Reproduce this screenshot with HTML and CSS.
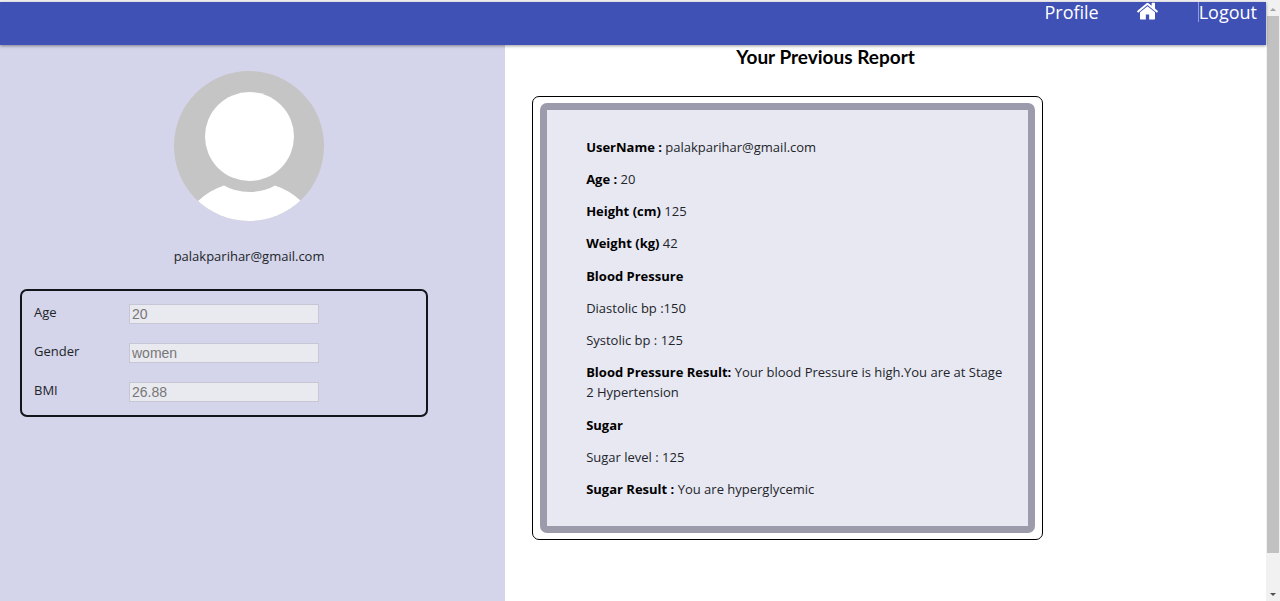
FILE: index.html
```html
<!DOCTYPE html>
<html lang="en">
<head>
<meta charset="utf-8">
<title>Your Previous Report</title>
<link rel="stylesheet" href="styles.css">
</head>
<body>
<div class="window">
  <div class="page">
    <header class="navbar">
      <nav class="nav-links">
        <a class="nav-link" href="#profile">Profile</a>
        <a class="nav-home" href="#home" aria-label="Home">
          <svg class="home-icon" viewBox="25 230 1614 1306" aria-hidden="true"><path fill="currentColor" d="M1408 992v480q0 26-19 45t-45 19h-384v-384h-256v384h-384q-26 0-45-19t-19-45v-480q0-1 .5-3t.5-3l575-474 575 474q1 2 1 6zm223-69l-62 74q-8 9-21 11h-3q-13 0-21-7l-692-577-692 577q-12 8-24 7-13-2-21-11l-62-74q-8-10-7-23.500t11-21.500l719-599q32-26 76-26t76 26l244 204v-195q0-14 9-23t23-9h192q14 0 23 9t9 23v408l219 182q10 8 11 21.500t-7 23.500z"/></svg>
        </a>
        <a class="nav-link nav-logout" href="#logout">Logout</a>
      </nav>
    </header>
    <div class="columns">
      <aside class="sidebar">
        <svg class="avatar" viewBox="0 0 150 150" role="img" aria-label="User avatar">
          <defs><clipPath id="disc"><circle cx="75" cy="75" r="75"/></clipPath></defs>
          <g clip-path="url(#disc)">
            <rect width="150" height="150" fill="#c5c5c5"/>
            <path fill="#fff" d="M24 130Q36 119 50 114.500Q61 121 75.500 121Q90 121 101 114.500Q115 119 127 130L127 150H24Z"/>
            <circle cx="75.500" cy="65.500" r="44.500" fill="#fff"/>
          </g>
        </svg>
        <p class="email">palakparihar@gmail.com</p>
        <form class="details">
          <label for="age">Age</label>
          <input id="age" type="text" value="20" disabled>
          <label for="gender">Gender</label>
          <input id="gender" type="text" value="women" disabled>
          <label for="bmi">BMI</label>
          <input id="bmi" type="text" value="26.88" disabled>
        </form>
      </aside>
      <main class="main">
        <h1 class="title">Your Previous Report</h1>
        <div class="report-frame">
          <div class="report">
            <section class="group">
              <p><b>UserName :</b> palakparihar@gmail.com</p>
              <p><b>Age :</b> 20</p>
              <p><b>Height (cm)</b> 125</p>
              <p><b>Weight (kg)</b> 42</p>
            </section>
            <section class="group">
              <p><b>Blood Pressure</b></p>
              <p>Diastolic bp :150</p>
              <p>Systolic bp : 125</p>
              <p><b>Blood Pressure Result:</b> Your blood Pressure is high.You are at Stage 2 Hypertension</p>
            </section>
            <section class="group">
              <p><b>Sugar</b></p>
              <p>Sugar level : 125</p>
              <p><b>Sugar Result :</b> You are hyperglycemic</p>
            </section>
          </div>
        </div>
      </main>
    </div>
  </div>
  <div class="scrollbar" aria-hidden="true">
    <svg class="arrow arrow-up" viewBox="0 0 14 14"><path d="M4 9L7 6L10 9Z"/></svg>
    <div class="track"><div class="thumb"></div></div>
    <svg class="arrow" viewBox="0 0 14 14"><path d="M4 6L7 9L10 6Z"/></svg>
  </div>
</div>
</body>
</html>
```
FILE: styles.css
```css
* {
  box-sizing: border-box;
}

body {
  margin: 0;
  background: #fff;
  color: #212529;
  font-family: "Open Sans", "Noto Sans", sans-serif;
  font-size: 13px;
  line-height: 20px;
}

p {
  margin: 0;
}

.window {
  display: flex;
  min-height: 100vh;
  border-top: 2px solid #f1f1f3;
}

.page {
  flex: 1;
  display: flex;
  flex-direction: column;
}

.navbar {
  position: relative;
  height: 43px;
  background: #3f51b5;
  box-shadow: 0 1px 3px rgba(0, 0, 0, 0.4);
}

.nav-links {
  display: flex;
  justify-content: flex-end;
  padding-right: 9px;
}

.nav-link,
.nav-home {
  color: #fff;
  font-size: 18px;
  line-height: 20px;
  text-decoration: none;
}

.nav-home {
  margin: 0 40px 0 38px;
}

.home-icon {
  display: block;
  width: 21px;
  height: 18px;
}

.nav-logout {
  border-left: 1px solid #8f9ae0;
}

.columns {
  flex: 1;
  display: flex;
}

.sidebar {
  width: 39.9%;
  padding: 26px 7px 0 0;
  background: #d4d4ea;
  display: flex;
  flex-direction: column;
}

.avatar {
  width: 150px;
  height: 150px;
  align-self: center;
}

.email {
  margin: 25px 0 23px;
  text-align: center;
}

.details {
  display: grid;
  grid-template-columns: 95px 190px;
  row-gap: 19px;
  width: 82%;
  margin-left: 20px;
  padding: 13px 12px;
  border: 2px solid #14141c;
  border-radius: 7px;
}

.details label {
  line-height: 16px;
}

.details input {
  width: 100%;
  height: 20px;
  padding: 0 2px;
  border: 1px solid #c6c6d4;
  background: #e9e9f0;
  color: #777;
  font-family: "Liberation Sans", sans-serif;
  font-size: 14px;
}

.main {
  flex: 1;
  padding: 0 147px 0 27px;
}

.title {
  margin: 0 0 27px;
  color: #000;
  font-family: Lato, sans-serif;
  font-size: 19px;
  font-weight: 700;
  line-height: 24px;
  text-align: center;
}

.report-frame {
  width: 87%;
  padding: 6px 7px;
  border: 1px solid #000;
  border-radius: 7px;
}

.report {
  display: flex;
  flex-direction: column;
  gap: 13px;
  padding: 27px 20px 27px 39px;
  border: 7px solid #9c9bab;
  border-radius: 7px;
  background: #e8e8f3;
}

.group {
  display: flex;
  flex-direction: column;
  gap: 12px;
}

.group b {
  color: #000;
  font-weight: 700;
}

.scrollbar {
  width: 14px;
  display: flex;
  flex-direction: column;
  background: #f1f1f1;
}

.arrow {
  width: 14px;
  height: 14px;
  fill: #505050;
}

.arrow-up {
  fill: #a3a3a3;
}

.track {
  flex: 1;
  padding: 0 1px;
}

.thumb {
  height: 94%;
  background: #c1c1c1;
}
```
